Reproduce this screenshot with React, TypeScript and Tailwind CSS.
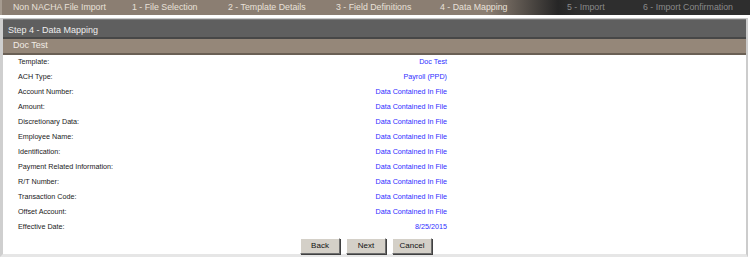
import React from "react";

const tabs = [
  { label: "Non NACHA File Import", w: 130, pl: 11, dark: false },
  { label: "1 - File Selection", w: 96, pl: 0, dark: false },
  { label: "2 - Template Details", w: 108, pl: 0, dark: false },
  { label: "3 - Field Definitions", w: 104, pl: 0, dark: false },
  { label: "4 - Data Mapping", w: 127, pl: 0, dark: false },
  { label: "5 - Import", w: 76, pl: 0, dark: true },
  { label: "6 - Import Confirmation", w: 0, pl: 0, dark: true },
];

const rows: [string, string][] = [
  ["Template:", "Doc Test"],
  ["ACH Type:", "Payroll (PPD)"],
  ["Account Number:", "Data Contained In File"],
  ["Amount:", "Data Contained In File"],
  ["Discretionary Data:", "Data Contained In File"],
  ["Employee Name:", "Data Contained In File"],
  ["Identification:", "Data Contained In File"],
  ["Payment Related Information:", "Data Contained In File"],
  ["R/T Number:", "Data Contained In File"],
  ["Transaction Code:", "Data Contained In File"],
  ["Offset Account:", "Data Contained In File"],
  ["Effective Date:", "8/25/2015"],
];

function Btn({ children }: { children: React.ReactNode }) {
  return (
    <div className="w-[40px] h-[16px] flex items-center justify-center bg-[#d4d0c8] border border-t-white border-l-white border-r-[#6e6e6e] border-b-[#6e6e6e] shadow-[1px_1px_0_#404040] text-[8px] text-[#111]">
      {children}
    </div>
  );
}

export default function App() {
  return (
    <div className="w-[750px] h-[257px] bg-white overflow-hidden" style={{ fontFamily: '"Liberation Sans", Arial, sans-serif' }}>
      {/* top tab bar */}
      <div className="flex items-center h-[15px] w-[750px] border-l-2 border-l-[#a69b90] text-[8.8px] whitespace-nowrap bg-[linear-gradient(to_right,#8b7e72_485px,#262626_556px,#2e2e2e_575px)]">
        {tabs.map((t, i) => (
          <div
            key={i}
            className={`shrink-0 ${t.dark ? "text-[#8a8a8a]" : "text-[#e9e1d9]"}`}
            style={{ width: t.w || undefined, paddingLeft: t.pl }}
          >
            {t.label}
          </div>
        ))}
      </div>

      {/* panel */}
      <div className="mt-[3px] w-[748px] h-[239px] border-l-[3px] border-l-[#cfcfcf] border-r-2 border-r-[#cccccc] border-t border-t-[#c8c8c8] border-b-[3px] border-b-[#e6e6e6]">
        <div className="h-[20px] pt-[4px] bg-[#5f5f5f] border-t border-t-[#7a7a7a] border-b-2 border-b-[#474747] flex items-center pl-[5px] text-[9px] text-[#eeeeee]">
          Step 4 - Data Mapping
        </div>
        <div className="h-[16px] bg-[#958779] border-b-2 border-b-[#6a6055] flex items-center pl-[10px] text-[9px] text-[#f2ece6]">
          Doc Test
        </div>
        <div>
          {rows.map(([l, v], i) => (
            <div key={i} className="flex h-[15px] items-center text-[7.2px]">
              <div className="w-[312px] pl-[15px] text-[#1a1a1a]">{l}</div>
              <div className="w-[132px] text-right text-[#2e2eff]">{v}</div>
            </div>
          ))}
        </div>
        <div className="flex gap-[6px] pl-[297px] mt-[3px]">
          <Btn>Back</Btn>
          <Btn>Next</Btn>
          <Btn>Cancel</Btn>
        </div>
      </div>
    </div>
  );
}
